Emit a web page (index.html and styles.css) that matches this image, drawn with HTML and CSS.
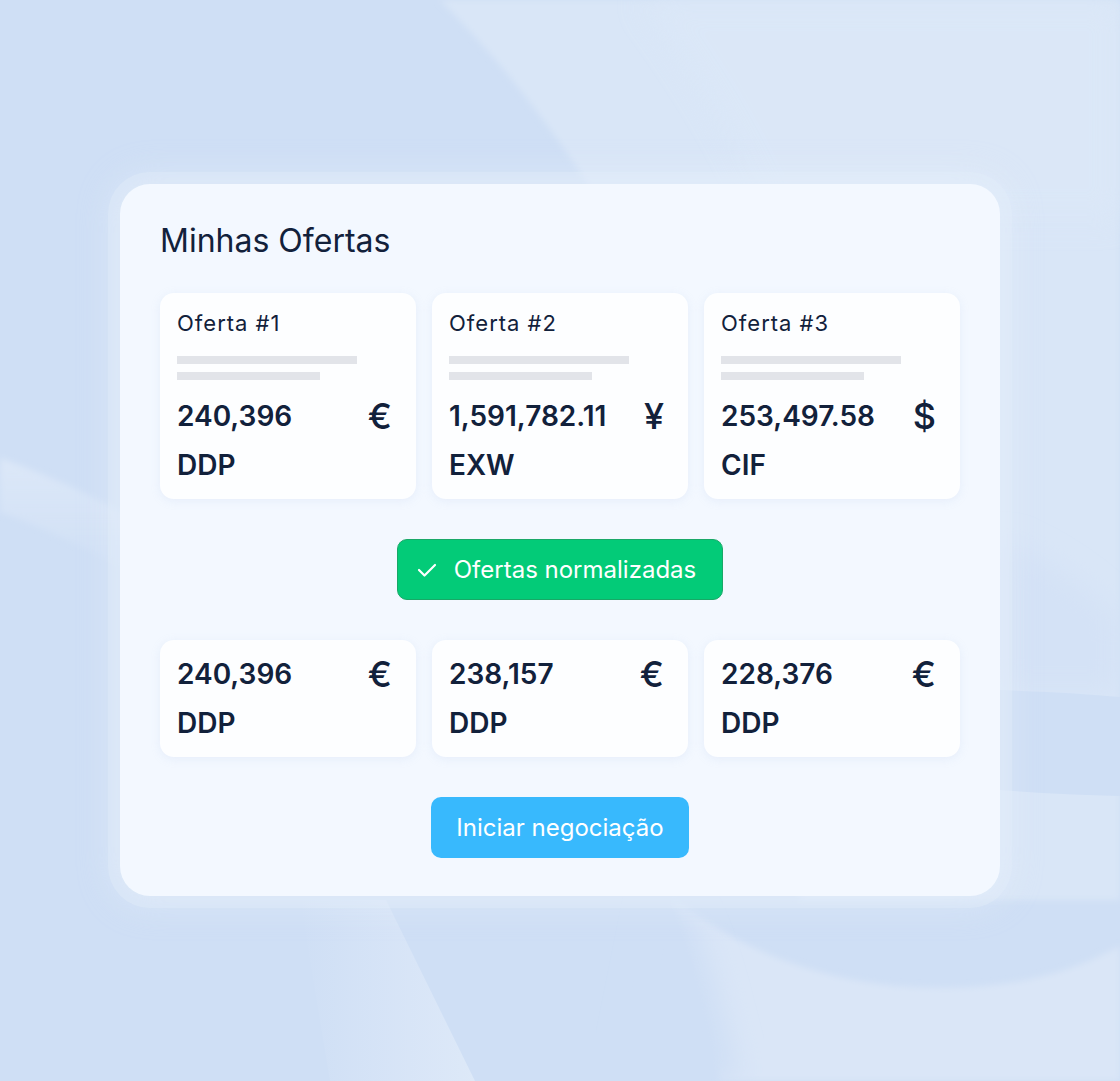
FILE: index.html
```html
<!DOCTYPE html>
<html>

<head>
    <title>Minhas Ofertas</title>
    <meta charset="UTF-8" />
    <link rel="stylesheet" href="styles.css">
</head>

<body>
    <div class="scene">
        <!-- soft swooshes behind the panel -->
        <svg class="backdrop" width="1120" height="1081" viewBox="0 0 1120 1081">
            <defs>
                <filter id="soft" x="-10%" y="-10%" width="120%" height="120%">
                    <feGaussianBlur stdDeviation="3" />
                </filter>
                <filter id="softer" x="-20%" y="-20%" width="140%" height="140%">
                    <feGaussianBlur stdDeviation="14" />
                </filter>
                <linearGradient id="bandFade" x1="0" y1="0" x2="1" y2="0">
                    <stop offset="0" stop-color="#dbe7f8" stop-opacity="0" />
                    <stop offset="0.75" stop-color="#dbe7f8" stop-opacity="0.9" />
                    <stop offset="1" stop-color="#dde9f8" />
                </linearGradient>
                <linearGradient id="leftFade" x1="0" y1="0" x2="0" y2="1">
                    <stop offset="0" stop-color="#dce8f8" />
                    <stop offset="1" stop-color="#dce8f8" stop-opacity="0" />
                </linearGradient>
            </defs>
            <rect width="1120" height="1081" fill="#cfdff5" />
            <path d="M440,0 C560,120 680,300 760,560 L800,900 L1120,900 L1120,0 Z" fill="#d9e6f7" filter="url(#soft)" />
            <path d="M640,0 C700,80 740,150 770,220 L1120,220 L1120,0 Z" fill="#dce8f8" filter="url(#softer)" opacity="0.7" />
            <path d="M1000,540 C1050,560 1090,590 1120,620 L1120,690 L1000,690 Z" fill="#d4e2f6" filter="url(#softer)" />
            <path d="M1000,690 C1050,692 1090,694 1120,697 L1120,796 C1080,795 1040,793 1000,790 Z" fill="#cfdff5" />
            <path d="M671,897 C740,950 830,990 950,988 C1030,986 1080,968 1120,946 L1120,1081 L720,1081 C705,1010 690,950 671,897 Z" fill="#dae6f7" filter="url(#soft)" />
            <path d="M660,880 C700,900 720,1000 740,1081 L620,1081 Z" fill="#cfdff5" filter="url(#softer)" />
            <path d="M300,900 L386,900 L475,1081 L330,1081 Z" fill="url(#bandFade)" />
            <path d="M0,458 C40,472 90,494 140,522 L140,580 C90,548 40,526 0,512 Z" fill="url(#leftFade)" filter="url(#soft)" />
        </svg>

        <div class="offers">
            <h1 class="offers__title">Minhas Ofertas</h1>

            <!-- Original offers - START -->
            <div class="offers__grid">
                <div class="offer">
                    <span class="offer__label">Oferta #1</span>
                    <div class="offer__lines">
                        <span class="offer__line offer__line--long"></span>
                        <span class="offer__line offer__line--short"></span>
                    </div>
                    <div class="offer__amount">
                        <span>240,396</span>
                        <span class="offer__currency">€</span>
                    </div>
                    <span class="offer__term">DDP</span>
                </div>
                <div class="offer">
                    <span class="offer__label">Oferta #2</span>
                    <div class="offer__lines">
                        <span class="offer__line offer__line--long"></span>
                        <span class="offer__line offer__line--short"></span>
                    </div>
                    <div class="offer__amount">
                        <span>1,591,782.11</span>
                        <span class="offer__currency">¥</span>
                    </div>
                    <span class="offer__term">EXW</span>
                </div>
                <div class="offer">
                    <span class="offer__label">Oferta #3</span>
                    <div class="offer__lines">
                        <span class="offer__line offer__line--long"></span>
                        <span class="offer__line offer__line--short"></span>
                    </div>
                    <div class="offer__amount">
                        <span>253,497.58</span>
                        <span class="offer__currency">$</span>
                    </div>
                    <span class="offer__term">CIF</span>
                </div>
            </div>
            <!-- Original offers - END -->

            <div class="offers__action">
                <div class="badge badge--success">
                    <svg class="badge__icon" width="20" height="20" viewBox="0 0 20 20">
                        <polyline points="2,10 7.5,15.5 18,5" fill="none" stroke="#fff" stroke-width="2.2"
                            stroke-linecap="round" stroke-linejoin="round" />
                    </svg>
                    Ofertas normalizadas
                </div>
            </div>

            <!-- Normalized offers - START -->
            <div class="offers__grid">
                <div class="offer">
                    <div class="offer__amount">
                        <span>240,396</span>
                        <span class="offer__currency">€</span>
                    </div>
                    <span class="offer__term">DDP</span>
                </div>
                <div class="offer">
                    <div class="offer__amount">
                        <span>238,157</span>
                        <span class="offer__currency">€</span>
                    </div>
                    <span class="offer__term">DDP</span>
                </div>
                <div class="offer">
                    <div class="offer__amount">
                        <span>228,376</span>
                        <span class="offer__currency">€</span>
                    </div>
                    <span class="offer__term">DDP</span>
                </div>
            </div>
            <!-- Normalized offers - END -->

            <div class="offers__action">
                <button class="startButton">Iniciar negociação</button>
            </div>
        </div>
    </div>
</body>

</html>
```

FILE: styles.css
```css
:root {
    --text: #12213b;
    --panel-bg: #f3f8ff;
    --card-bg: #fdfeff;
    --line: #e2e4e9;
    --green: #03cb78;
    --green-border: #19a867;
    --blue: #38b9fd;
}

body {
    margin: 0;
    font-family: Inter, "Noto Sans", sans-serif;
    color: var(--text);
    background-color: #cfdff5;
}

.scene {
    position: relative;
    width: 1120px;
    height: 1081px;
    display: flex;
    justify-content: center;
    padding-top: 184px;
    box-sizing: border-box;
    overflow: hidden;
}

.backdrop {
    position: absolute;
    top: 0;
    left: 0;
}

/* Panel - START */
.offers {
    position: relative;
    width: 880px;
    height: 712px;
    box-sizing: border-box;
    padding: 40px 40px 39px;
    background-color: var(--panel-bg);
    border-radius: 30px;
    box-shadow: 0 0 0 12px rgba(228, 238, 251, 0.4), 0 0 30px 12px rgba(232, 240, 252, 0.35);
    display: flex;
    flex-direction: column;
}

.offers__title {
    margin: 0 0 35px;
    font-size: 32px;
    line-height: 34px;
    font-weight: 400;
}

.offers__grid {
    display: grid;
    grid-template-columns: repeat(3, 256px);
    column-gap: 16px;
}

.offers__action {
    display: flex;
    justify-content: center;
    margin: 40px 0;
}

.offers__action:last-child {
    margin-bottom: 0;
}
/* Panel - END */

/* Offer card - START */
.offer {
    background-color: var(--card-bg);
    border-radius: 14px;
    padding: 16px 24px 16px 17px;
    display: flex;
    flex-direction: column;
    box-shadow: 0 2px 10px rgba(170, 195, 230, 0.18);
}

.offer__label {
    font-size: 22px;
    line-height: 28px;
    letter-spacing: 1px;
}

.offer__lines {
    display: flex;
    flex-direction: column;
    gap: 8px;
    margin: 19px 0 18px;
}

.offer__line {
    height: 8px;
    background-color: var(--line);
}

.offer__line--long {
    width: 180px;
}

.offer__line--short {
    width: 143px;
}

.offer__amount {
    display: flex;
    justify-content: space-between;
    align-items: center;
    font-size: 28px;
    line-height: 36px;
    font-weight: 600;
}

.offer__currency {
    font-size: 36px;
    font-weight: 500;
}

.offer__term {
    margin-top: 13px;
    font-size: 28px;
    line-height: 36px;
    font-weight: 600;
}
/* Offer card - END */

/* Buttons - START */
.badge,
.startButton {
    height: 61px;
    box-sizing: border-box;
    border-radius: 10px;
    font-family: inherit;
    font-size: 24px;
    color: #fff;
    display: flex;
    align-items: center;
}

.badge--success {
    padding: 0 26px 0 19px;
    gap: 17px;
    background-color: var(--green);
    border: 1px solid var(--green-border);
}

.startButton {
    padding: 0 25px;
    border: none;
    background-color: var(--blue);
    cursor: pointer;
}
/* Buttons - END */
```
